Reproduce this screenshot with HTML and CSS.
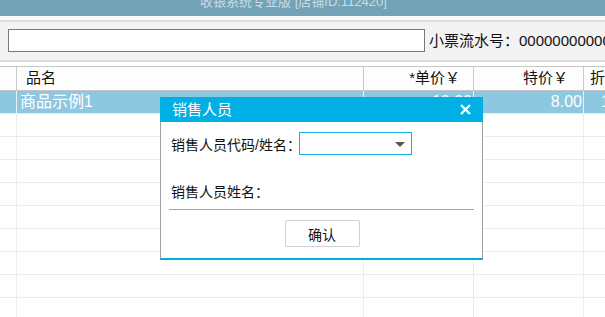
FILE: index.html
```html
<!DOCTYPE html>
<html lang="zh-CN">
<head>
  <meta charset="UTF-8" />
  <title>收银系统专业版</title>
  <link rel="stylesheet" href="styles.css">
</head>
<body>

<header class="topbar">
  <div class="topbar-title">收银系统专业版 [店铺ID:112420]</div>
</header>

<div class="toolbar">
  <input type="text" class="scan-input">
  <span class="ticket-no">小票流水号：00000000000</span>
</div>

<main class="grid">
  <div class="row head">
    <div class="cell"></div>
    <div class="cell">品名</div>
    <div class="cell num">*单价￥</div>
    <div class="cell num num-wide">特价￥</div>
    <div class="cell last">折扣</div>
  </div>
  <div class="row selected">
    <div class="cell"></div>
    <div class="cell name">商品示例1</div>
    <div class="cell num">10.00</div>
    <div class="cell num">8.00</div>
    <div class="cell last">100</div>
  </div>
  <div class="row"><div class="cell"></div><div class="cell"></div><div class="cell"></div><div class="cell"></div><div class="cell"></div></div>
  <div class="row"><div class="cell"></div><div class="cell"></div><div class="cell"></div><div class="cell"></div><div class="cell"></div></div>
  <div class="row"><div class="cell"></div><div class="cell"></div><div class="cell"></div><div class="cell"></div><div class="cell"></div></div>
  <div class="row"><div class="cell"></div><div class="cell"></div><div class="cell"></div><div class="cell"></div><div class="cell"></div></div>
  <div class="row"><div class="cell"></div><div class="cell"></div><div class="cell"></div><div class="cell"></div><div class="cell"></div></div>
  <div class="row"><div class="cell"></div><div class="cell"></div><div class="cell"></div><div class="cell"></div><div class="cell"></div></div>
  <div class="row"><div class="cell"></div><div class="cell"></div><div class="cell"></div><div class="cell"></div><div class="cell"></div></div>
  <div class="row"><div class="cell"></div><div class="cell"></div><div class="cell"></div><div class="cell"></div><div class="cell"></div></div>
  <div class="row"><div class="cell"></div><div class="cell"></div><div class="cell"></div><div class="cell"></div><div class="cell"></div></div>
</main>

<!-- 销售人员 dialog -->
<div class="dialog">
  <div class="dialog-title">
    <span>销售人员</span>
    <svg class="dialog-close" width="11" height="11" viewBox="0 0 11 11">
      <path d="M1 1 L10 10 M10 1 L1 10" stroke="#fff" stroke-width="2.4" fill="none"/>
    </svg>
  </div>
  <div class="dialog-body">
    <div class="field">
      <span class="field-label">销售人员代码/姓名：</span>
      <div class="select">
        <span class="select-arrow"></span>
      </div>
    </div>
    <div class="field field-name">
      <span class="field-label">销售人员姓名：</span>
    </div>
    <hr class="divider">
    <div class="actions">
      <button class="btn">确认</button>
    </div>
  </div>
</div>

</body>
</html>
```

FILE: styles.css
```css
* { box-sizing: border-box; }

body {
  margin: 0;
  font-family: "Liberation Sans", "Noto Sans CJK SC", sans-serif;
  background: #fff;
  overflow: hidden;
  width: 605px;
  height: 317px;
  position: relative;
}

.topbar {
  height: 16px;
  background: #72a2b5;
  overflow: hidden;
  text-align: center;
}

.topbar-title {
  margin-top: -6px;
  margin-left: -18px;
  line-height: 16px;
  font-size: 13px;
  color: #c9dde6;
}

.toolbar {
  display: flex;
  align-items: flex-start;
  height: 46px;
  padding: 9px 0 0 8px;
  background: #f3f3f3;
  border-top: 4px solid #f9f9f9;
  box-shadow: inset 0 2px 0 #dcdcdc;
  border-bottom: 2px solid #dcdcdc;
}

.scan-input {
  flex-shrink: 0;
  width: 417px;
  height: 23px;
  margin: 0;
  border: 1px solid #7a7a7a;
  background: #fff;
}

.ticket-no {
  margin-left: 4px;
  font-size: 15px;
  line-height: 23px;
  white-space: nowrap;
  color: #111;
}

.grid {
  margin-top: 4px;
  border-top: 1px solid #c6c6c6;
}

.row {
  display: grid;
  grid-template-columns: 17px 347px 110px 110px 1fr;
  height: 23px;
  border-bottom: 1px solid #ececec;
  font-size: 15px;
  line-height: 22px;
}

.row .cell {
  border-right: 1px solid #ececec;
  white-space: nowrap;
  overflow: hidden;
}

.row.head {
  height: 24px;
  background: #fdfdfd;
  border-bottom-color: #c4c4c4;
  color: #111;
}

.row.head .cell {
  border-right-color: #cacaca;
  padding-left: 9px;
}

.row.head .num {
  padding-right: 13px;
}

.row.head .num-wide {
  padding-right: 15px;
}

.row.head .last {
  padding-left: 6px;
}

.row.selected {
  background: #8ec7e0;
  color: #fff;
  font-size: 16px;
}

.row.selected .cell {
  border-right-color: #e6f2f8;
}

.name {
  padding-left: 3px;
}

.num {
  text-align: right;
  padding-right: 1px;
}

.row.selected .last {
  padding-left: 17px;
}

.row .cell:last-child {
  border-right: none;
}

/* dialog */
.dialog {
  position: absolute;
  left: 160px;
  top: 97px;
  width: 323px;
  background: #fff;
}

.dialog-title {
  height: 25px;
  background: #00afe4;
  color: #fff;
  font-size: 15px;
  line-height: 25px;
  padding: 0 12px;
  display: flex;
  justify-content: space-between;
  align-items: center;
}

.dialog-body {
  border-left: 1px solid #a0a0a0;
  border-right: 1px solid #a0a0a0;
  border-bottom: 2px solid #00aee2;
  padding: 10px 8px 11px;
}

.field {
  display: flex;
  align-items: center;
  height: 23px;
  padding-left: 2px;
  font-size: 14px;
  color: #111;
}

.field-label {
  width: 128px;
  white-space: nowrap;
}

.field-name {
  margin-top: 24px;
}

.select {
  position: relative;
  width: 113px;
  height: 23px;
  border: 1px solid #1aa9dc;
  background: #fff;
}

.select-arrow {
  position: absolute;
  right: 6px;
  top: 9px;
  width: 0;
  height: 0;
  border-left: 5px solid transparent;
  border-right: 5px solid transparent;
  border-top: 5px solid #555;
}

.divider {
  margin: 7px 0 0;
  border: none;
  border-top: 1px solid #a4a4a4;
}

.actions {
  display: flex;
  justify-content: center;
  margin-top: 10px;
}

.btn {
  width: 75px;
  height: 27px;
  margin-left: 1px;
  padding: 0;
  background: #fff;
  border: 1px solid #d2d2d2;
  border-radius: 2px;
  font-family: "Liberation Sans", "Noto Sans CJK SC", sans-serif;
  font-size: 14px;
  color: #111;
}
```
